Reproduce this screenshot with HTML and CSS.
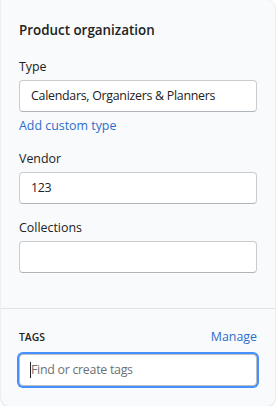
FILE: index.html
```html
<!DOCTYPE html>
<html lang="en">
<head>
<meta charset="utf-8">
<title>Product organization</title>
<link rel="stylesheet" href="styles.css">
</head>
<body>
<div class="card">
  <section class="section">
    <h2 class="title">Product organization</h2>
    <div class="field">
      <label class="label">Type</label>
      <div class="input">Calendars, Organizers &amp; Planners</div>
      <a class="link add-type" href="#">Add custom type</a>
    </div>
    <div class="field field-after-link">
      <label class="label">Vendor</label>
      <div class="input">123</div>
    </div>
    <div class="field">
      <label class="label">Collections</label>
      <div class="input"></div>
    </div>
  </section>
  <section class="section tags-section">
    <div class="tags-head">
      <span class="tags-title">Tags</span>
      <a class="link" href="#">Manage</a>
    </div>
    <div class="input focused"><span class="caret"></span><span class="placeholder">Find or create tags</span></div>
  </section>
</div>
</body>
</html>
```
FILE: styles.css
```css
html, body {
  margin: 0;
  padding: 0;
  background: #ffffff;
}
body {
  font-family: "Open Sans", "Lato", sans-serif;
  font-size: 12.4px;
  color: #202223;
  padding-left: 1px;
}
.card {
  width: 274px;
  height: 406px;
  box-sizing: border-box;
  background: #f9fafb;
  border-radius: 0 8px 8px 8px;
  box-shadow: 0 0 0 1px rgba(63, 63, 68, 0.06), 0 1px 2px rgba(63, 63, 68, 0.12);
  display: flex;
  flex-direction: column;
}
.section {
  padding: 18px 18px 35px;
}
.title {
  margin: 0;
  font-size: 13.4px;
  line-height: 24px;
  font-weight: 600;
}
.field {
  margin-top: 14px;
  display: flex;
  flex-direction: column;
}
.section > .field:first-of-type {
  margin-top: 15px;
}
.field-after-link {
  margin-top: 13px;
}
.label {
  line-height: 20px;
  margin-bottom: 3px;
}
.input {
  height: 32px;
  box-sizing: border-box;
  background: #ffffff;
  border: 1px solid #c9cccf;
  border-bottom-color: #aeb4b9;
  border-radius: 4px;
  padding: 0 11px;
  display: flex;
  align-items: center;
  line-height: 20px;
  color: #202223;
  white-space: nowrap;
  overflow: hidden;
  letter-spacing: -0.28px;
}
.link {
  color: #2c6ecb;
  text-decoration: none;
  line-height: 20px;
}
.add-type {
  margin-top: 4px;
  align-self: flex-start;
}
.tags-section {
  border-top: 1px solid #e1e3e5;
  padding: 18px 18px 19px;
}
.tags-head {
  display: flex;
  justify-content: space-between;
  align-items: center;
  line-height: 20px;
  margin-bottom: 7px;
}
.tags-title {
  text-transform: uppercase;
  font-size: 10.4px;
  font-weight: 600;
}
.focused {
  box-shadow: 0 0 0 2px #458fff;
  border-color: #babfc3;
  padding-left: 10px;
}
.caret {
  width: 1px;
  height: 16px;
  background: #202223;
}
.placeholder {
  color: #6d7175;
}
```
